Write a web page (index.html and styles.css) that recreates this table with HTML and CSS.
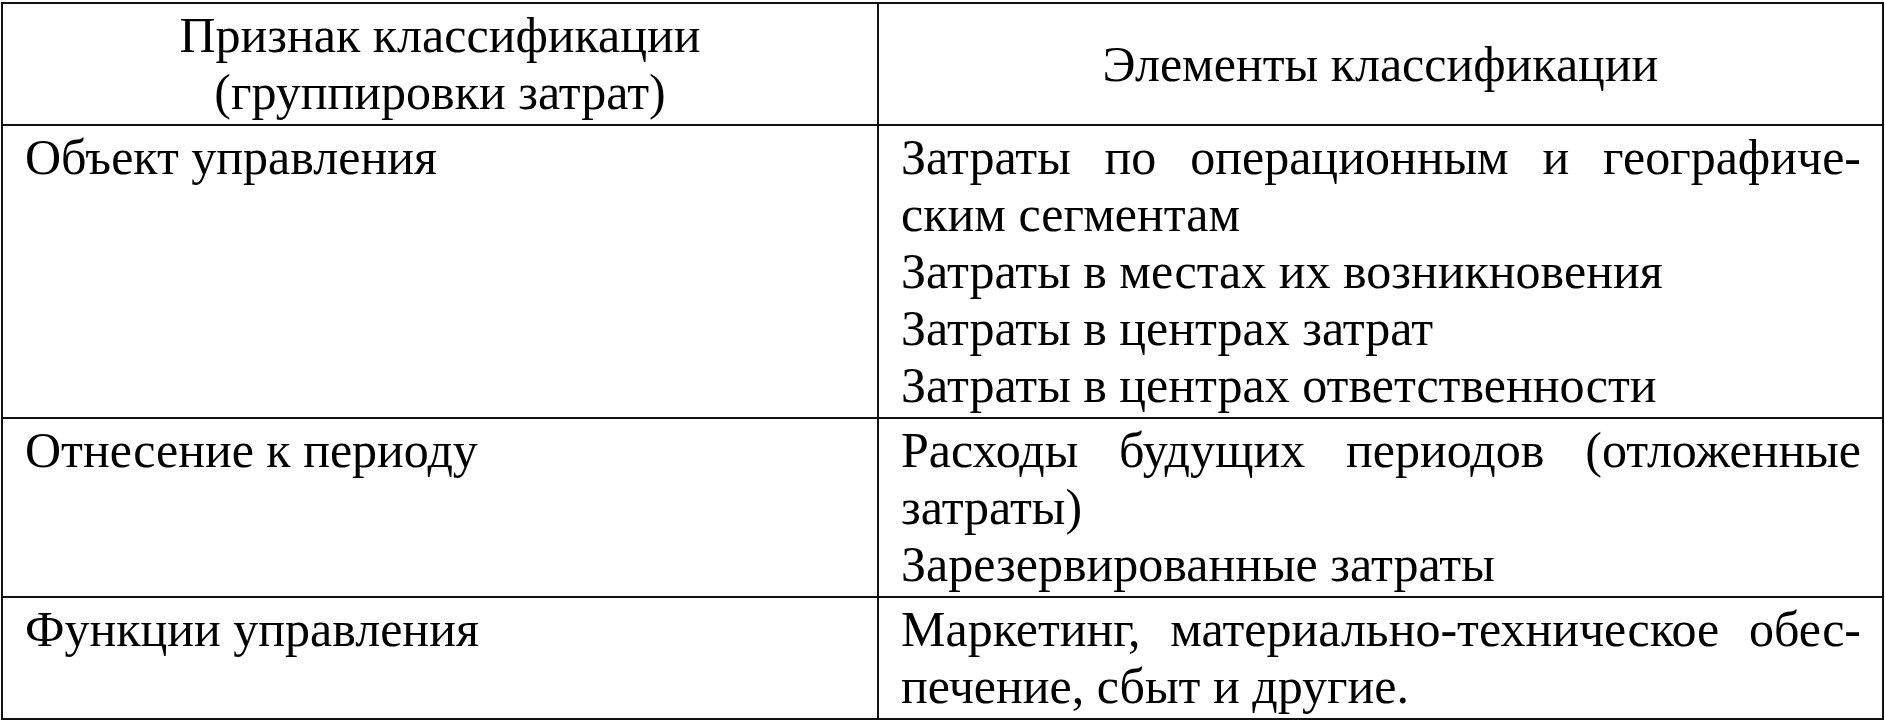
FILE: index.html
```html
<!DOCTYPE html>
<html lang="ru">
<head>
<meta charset="utf-8">
<title>Классификация затрат</title>
<link rel="stylesheet" href="styles.css">
</head>
<body>
<table class="cls">
  <colgroup>
    <col class="c1">
    <col class="c2">
  </colgroup>
  <thead>
    <tr>
      <th class="hd">Признак классификации<br>(группировки затрат)</th>
      <th class="hd">Элементы классификации</th>
    </tr>
  </thead>
  <tbody>
    <tr>
      <td class="key">Объект управления</td>
      <td class="val">
        <span class="ln jl">Затраты по операционным и географиче-</span>
        <span class="ln">ским сегментам</span>
        <span class="ln">Затраты в местах их возникновения</span>
        <span class="ln">Затраты в центрах затрат</span>
        <span class="ln">Затраты в центрах ответственности</span>
      </td>
    </tr>
    <tr>
      <td class="key">Отнесение к периоду</td>
      <td class="val">
        <span class="ln jl">Расходы будущих периодов (отложенные</span>
        <span class="ln">затраты)</span>
        <span class="ln">Зарезервированные затраты</span>
      </td>
    </tr>
    <tr>
      <td class="key">Функции управления</td>
      <td class="val">
        <span class="ln jl">Маркетинг, материально-техническое обес-</span>
        <span class="ln">печение, сбыт и другие.</span>
      </td>
    </tr>
  </tbody>
</table>
</body>
</html>
```
FILE: styles.css
```css
html, body {
  margin: 0;
  padding: 0;
  background: #ffffff;
}
body {
  padding: 2px 0 0 1px;
  font-family: "Liberation Serif", "Times New Roman", serif;
  font-size: 50px;
  line-height: 57px;
  color: #000;
}
.cls {
  border-collapse: collapse;
  table-layout: fixed;
  width: 1881px;
}
.c1 { width: 876px; }
.c2 { width: 1005px; }
.cls th, .cls td {
  border: 2px solid #111;
  vertical-align: top;
  padding: 3px 21px 3px 22px;
  text-align: left;
  font-weight: normal;
}
.cls th.hd {
  text-align: center;
  vertical-align: middle;
  padding: 3px 10px;
}
.ln {
  display: block;
  white-space: nowrap;
}
.ln.jl {
  white-space: normal;
  text-align: justify;
  text-align-last: justify;
}
```
